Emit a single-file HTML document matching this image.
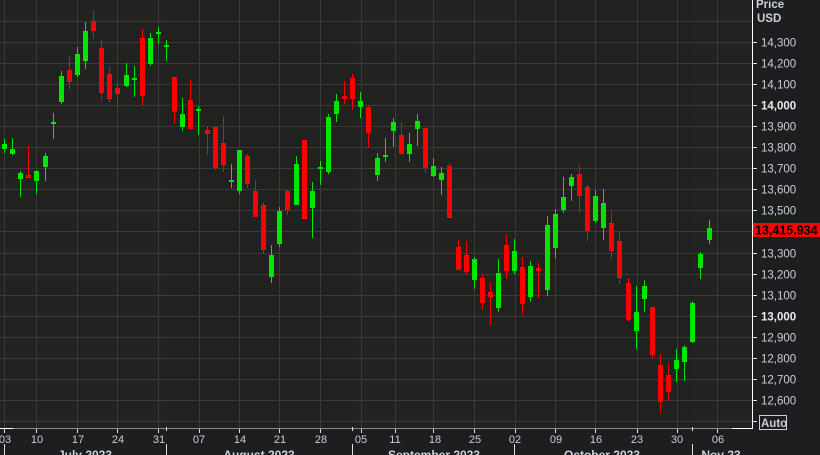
<!DOCTYPE html>
<html><head><meta charset="utf-8"><style>
html,body{margin:0;padding:0;background:#1e1e20;width:820px;height:455px;overflow:hidden}
svg{display:block}
text{font-family:"Liberation Sans",sans-serif}
</style></head><body>
<svg width="820" height="455" viewBox="0 0 820 455" xmlns="http://www.w3.org/2000/svg">
<rect x="0" y="0" width="820" height="455" fill="#1e1e20"/>
<rect x="0" y="0" width="752" height="428" fill="#222321"/>
<rect x="167" y="0" width="186" height="428" fill="#212120"/>
<rect x="514" y="0" width="179" height="428" fill="#212120"/>
<g stroke="#393a39" stroke-width="1">
<path d="M0 21.5H752M0 42.5H752M0 63.5H752M0 84.5H752M0 105.5H752M0 126.5H752M0 147.5H752M0 168.5H752M0 189.5H752M0 210.5H752M0 231.5H752M0 253.5H752M0 274.5H752M0 295.5H752M0 316.5H752M0 337.5H752M0 358.5H752M0 379.5H752M0 400.5H752M0 421.5H752"/>
<path d="M4.5 0V428M36.5 0V428M77.5 0V428M117.5 0V428M158.5 0V428M199.5 0V428M239.5 0V428M279.5 0V428M320.5 0V428M361.5 0V428M395.5 0V428M433.5 0V428M474.5 0V428M515.5 0V428M555.5 0V428M595.5 0V428M637.5 0V428M677.5 0V428M717.5 0V428"/>
</g>
<g id="c" stroke-width="1">
<g fill="#00e600" stroke="#00e600">
<path d="M4.5 139V153M12.5 138V155M20.5 171V197M36.5 170V194M45.5 153V181M53.5 113V139M61.5 71V104M77.5 47V77M85.5 22V69M126.5 63V87M134.5 66V97M150.5 33V66M158.5 27V44M166.5 40V61M182.5 98V131M198.5 106V135M231.5 164V188M239.5 150V194M271.5 245V283M279.5 207V247M296.5 156V205M312.5 182V238M320.5 161V185M328.5 114V174M336.5 94V122M360.5 92V118M377.5 153V181M385.5 138V162M393.5 118V147M409.5 133V162M417.5 114V146M433.5 158V177M441.5 167V195M474.5 257V289M498.5 259V312M514.5 239V274M530.5 261V302M547.5 216V296M555.5 209V258M563.5 177V213M571.5 174V201M595.5 190V223M603.5 189V240M636.5 286V349M644.5 280V312M676.5 349V382M684.5 345V381M692.5 301V343M700.5 252V279M709.5 220V244"/>
<g stroke="none">
<rect x="2" y="144" width="5" height="5"/><rect x="10" y="149" width="5" height="5"/><rect x="18" y="173" width="5" height="6"/><rect x="34" y="171" width="5" height="10"/><rect x="43" y="156" width="5" height="11"/><rect x="51" y="122" width="5" height="2"/><rect x="59" y="76" width="5" height="26"/><rect x="75" y="54" width="5" height="21"/><rect x="83" y="31" width="5" height="30"/><rect x="124" y="75" width="5" height="11"/><rect x="132" y="78" width="5" height="2"/><rect x="148" y="38" width="5" height="26"/><rect x="156" y="32" width="5" height="2"/><rect x="164" y="45" width="5" height="2"/><rect x="180" y="114" width="5" height="13"/><rect x="196" y="109" width="5" height="2"/><rect x="229" y="180" width="5" height="2"/><rect x="237" y="150" width="5" height="41"/><rect x="269" y="255" width="5" height="22"/><rect x="277" y="211" width="5" height="33"/><rect x="294" y="164" width="5" height="41"/><rect x="310" y="191" width="5" height="17"/><rect x="318" y="167" width="5" height="2"/><rect x="326" y="117" width="5" height="55"/><rect x="334" y="101" width="5" height="13"/><rect x="358" y="101" width="5" height="6"/><rect x="375" y="158" width="5" height="17"/><rect x="383" y="155" width="5" height="2"/><rect x="391" y="122" width="5" height="9"/><rect x="407" y="144" width="5" height="10"/><rect x="415" y="121" width="5" height="8"/><rect x="431" y="166" width="5" height="10"/><rect x="439" y="173" width="5" height="7"/><rect x="472" y="259" width="5" height="21"/><rect x="496" y="273" width="5" height="35"/><rect x="512" y="251" width="5" height="20"/><rect x="528" y="266" width="5" height="31"/><rect x="545" y="225" width="5" height="65"/><rect x="553" y="214" width="5" height="34"/><rect x="561" y="197" width="5" height="13"/><rect x="569" y="177" width="5" height="9"/><rect x="593" y="196" width="5" height="25"/><rect x="601" y="203" width="5" height="25"/><rect x="634" y="312" width="5" height="19"/><rect x="642" y="286" width="5" height="13"/><rect x="674" y="360" width="5" height="9"/><rect x="682" y="347" width="5" height="15"/><rect x="690" y="303" width="5" height="39"/><rect x="698" y="254" width="5" height="14"/><rect x="707" y="228" width="5" height="12"/>
</g></g>
<g fill="#ff0000" stroke="#ff0000">
<path d="M28.5 146V178M69.5 56V89M93.5 11V39M101.5 40V100M109.5 67V102M117.5 82V108M142.5 29V105M174.5 77V124M190.5 80V129M207.5 126V155M215.5 127V170M223.5 116V172M247.5 154V188M255.5 180V217M263.5 203V253M287.5 190V215M304.5 140V219M344.5 81V104M352.5 74V110M368.5 105V148M401.5 123V155M425.5 128V173M449.5 163V218M458.5 240V270M466.5 241V275M482.5 274V310M490.5 283V325M506.5 235V279M522.5 257V315M538.5 263V298M579.5 165V213M587.5 185V241M611.5 211V259M619.5 231V284M628.5 278V322M652.5 307V358M660.5 354V413M668.5 363V401"/>
<g stroke="none">
<rect x="26" y="175" width="5" height="3"/><rect x="67" y="70" width="5" height="12"/><rect x="91" y="21" width="5" height="10"/><rect x="99" y="48" width="5" height="45"/><rect x="107" y="74" width="5" height="25"/><rect x="115" y="88" width="5" height="6"/><rect x="140" y="38" width="5" height="58"/><rect x="172" y="77" width="5" height="35"/><rect x="188" y="100" width="5" height="29"/><rect x="205" y="130" width="5" height="4"/><rect x="213" y="127" width="5" height="41"/><rect x="221" y="143" width="5" height="22"/><rect x="245" y="156" width="5" height="28"/><rect x="253" y="191" width="5" height="26"/><rect x="261" y="205" width="5" height="45"/><rect x="285" y="191" width="5" height="19"/><rect x="302" y="140" width="5" height="79"/><rect x="342" y="96" width="5" height="3"/><rect x="350" y="78" width="5" height="21"/><rect x="366" y="107" width="5" height="26"/><rect x="399" y="135" width="5" height="19"/><rect x="423" y="128" width="5" height="40"/><rect x="447" y="166" width="5" height="52"/><rect x="456" y="247" width="5" height="23"/><rect x="464" y="255" width="5" height="17"/><rect x="480" y="278" width="5" height="25"/><rect x="488" y="292" width="5" height="5"/><rect x="504" y="245" width="5" height="26"/><rect x="520" y="267" width="5" height="37"/><rect x="536" y="268" width="5" height="3"/><rect x="577" y="174" width="5" height="22"/><rect x="585" y="187" width="5" height="44"/><rect x="609" y="223" width="5" height="28"/><rect x="617" y="241" width="5" height="37"/><rect x="626" y="283" width="5" height="37"/><rect x="650" y="307" width="5" height="48"/><rect x="658" y="365" width="5" height="37"/><rect x="666" y="375" width="5" height="17"/>
</g></g>
</g>
<!-- axes -->
<path d="M0 428.5H732" stroke="#8a8a8a" stroke-width="1"/>
<path d="M0 428.5H13" stroke="#fff" stroke-width="1"/>
<path d="M732 428.5H752.5V0" stroke="#fff" stroke-width="1" fill="none"/>
<g stroke="#ddd" stroke-width="1">
<path d="M752 42.5h5M752 63.5h5M752 84.5h5M752 105.5h5M752 126.5h5M752 147.5h5M752 168.5h5M752 189.5h5M752 210.5h5M752 231.5h5M752 253.5h5M752 274.5h5M752 295.5h5M752 316.5h5M752 337.5h5M752 358.5h5M752 379.5h5M752 400.5h5M752 421.5h5"/>
<path d="M4.5 429v4M36.5 429v4M77.5 429v4M117.5 429v4M158.5 429v4M166.5 427v4M199.5 429v4M239.5 429v4M279.5 429v4M320.5 429v4M352.5 427v4M361.5 429v4M395.5 429v4M433.5 429v4M474.5 429v4M515.5 429v4M555.5 429v4M595.5 429v4M637.5 429v4M677.5 429v4M692.5 427v4M717.5 429v4"/>
<path d="M4.5 444V455M166.5 444V455M352.5 444V455M514.5 444V455M692.5 444V455"/>
</g>
<g fill="#c8d0d8" font-size="11.5">
<text x="756" y="8" font-weight="bold">Price</text>
<text x="757" y="22" font-weight="bold">USD</text>
<text x="761" y="46.5">14,300</text>
<text x="761" y="67.5">14,200</text>
<text x="761" y="88.5">14,100</text>
<text x="761" y="109.5" font-weight="bold" fill="#e8ecf0">14,000</text>
<text x="761" y="130.5">13,900</text>
<text x="761" y="151.5">13,800</text>
<text x="761" y="172.5">13,700</text>
<text x="761" y="193.5">13,600</text>
<text x="761" y="214.5">13,500</text>
<text x="761" y="235.5">13,400</text>
<text x="761" y="257.5">13,300</text>
<text x="761" y="278.5">13,200</text>
<text x="761" y="299.5">13,100</text>
<text x="761" y="320.5" font-weight="bold" fill="#e8ecf0">13,000</text>
<text x="761" y="341.5">12,900</text>
<text x="761" y="362.5">12,800</text>
<text x="761" y="383.5">12,700</text>
<text x="761" y="404.5">12,600</text>
</g>
<rect x="753" y="223" width="67" height="14" fill="#ff0000"/>
<text x="755" y="234.5" font-size="12.5" font-weight="bold" fill="#000">13,415.934</text>
<rect x="759.5" y="415.5" width="27" height="14" fill="none" stroke="#c8d0d8" stroke-width="1"/>
<text x="761" y="427" font-size="11.5" font-weight="bold" fill="#c8d0d8">Auto</text>
<g fill="#c8d0d8" font-size="11" text-anchor="middle">
<text x="5" y="443">03</text><text x="37" y="443">10</text><text x="78" y="443">17</text><text x="118" y="443">24</text><text x="159" y="443">31</text><text x="199" y="443">07</text><text x="240" y="443">14</text><text x="280" y="443">21</text><text x="321" y="443">28</text><text x="361" y="443">05</text><text x="395" y="443">11</text><text x="435" y="443">18</text><text x="475" y="443">25</text><text x="515" y="443">02</text><text x="556" y="443">09</text><text x="596" y="443">16</text><text x="637" y="443">23</text><text x="677" y="443">30</text><text x="718" y="443">06</text>
</g>
<g fill="#c8d0d8" font-size="12" font-weight="bold" text-anchor="middle">
<text x="85" y="459">July 2023</text>
<text x="259" y="459">August 2023</text>
<text x="434" y="459">September 2023</text>
<text x="602" y="459">October 2023</text>
<text x="721" y="459">Nov 23</text>
</g>
</svg>
</body></html>
